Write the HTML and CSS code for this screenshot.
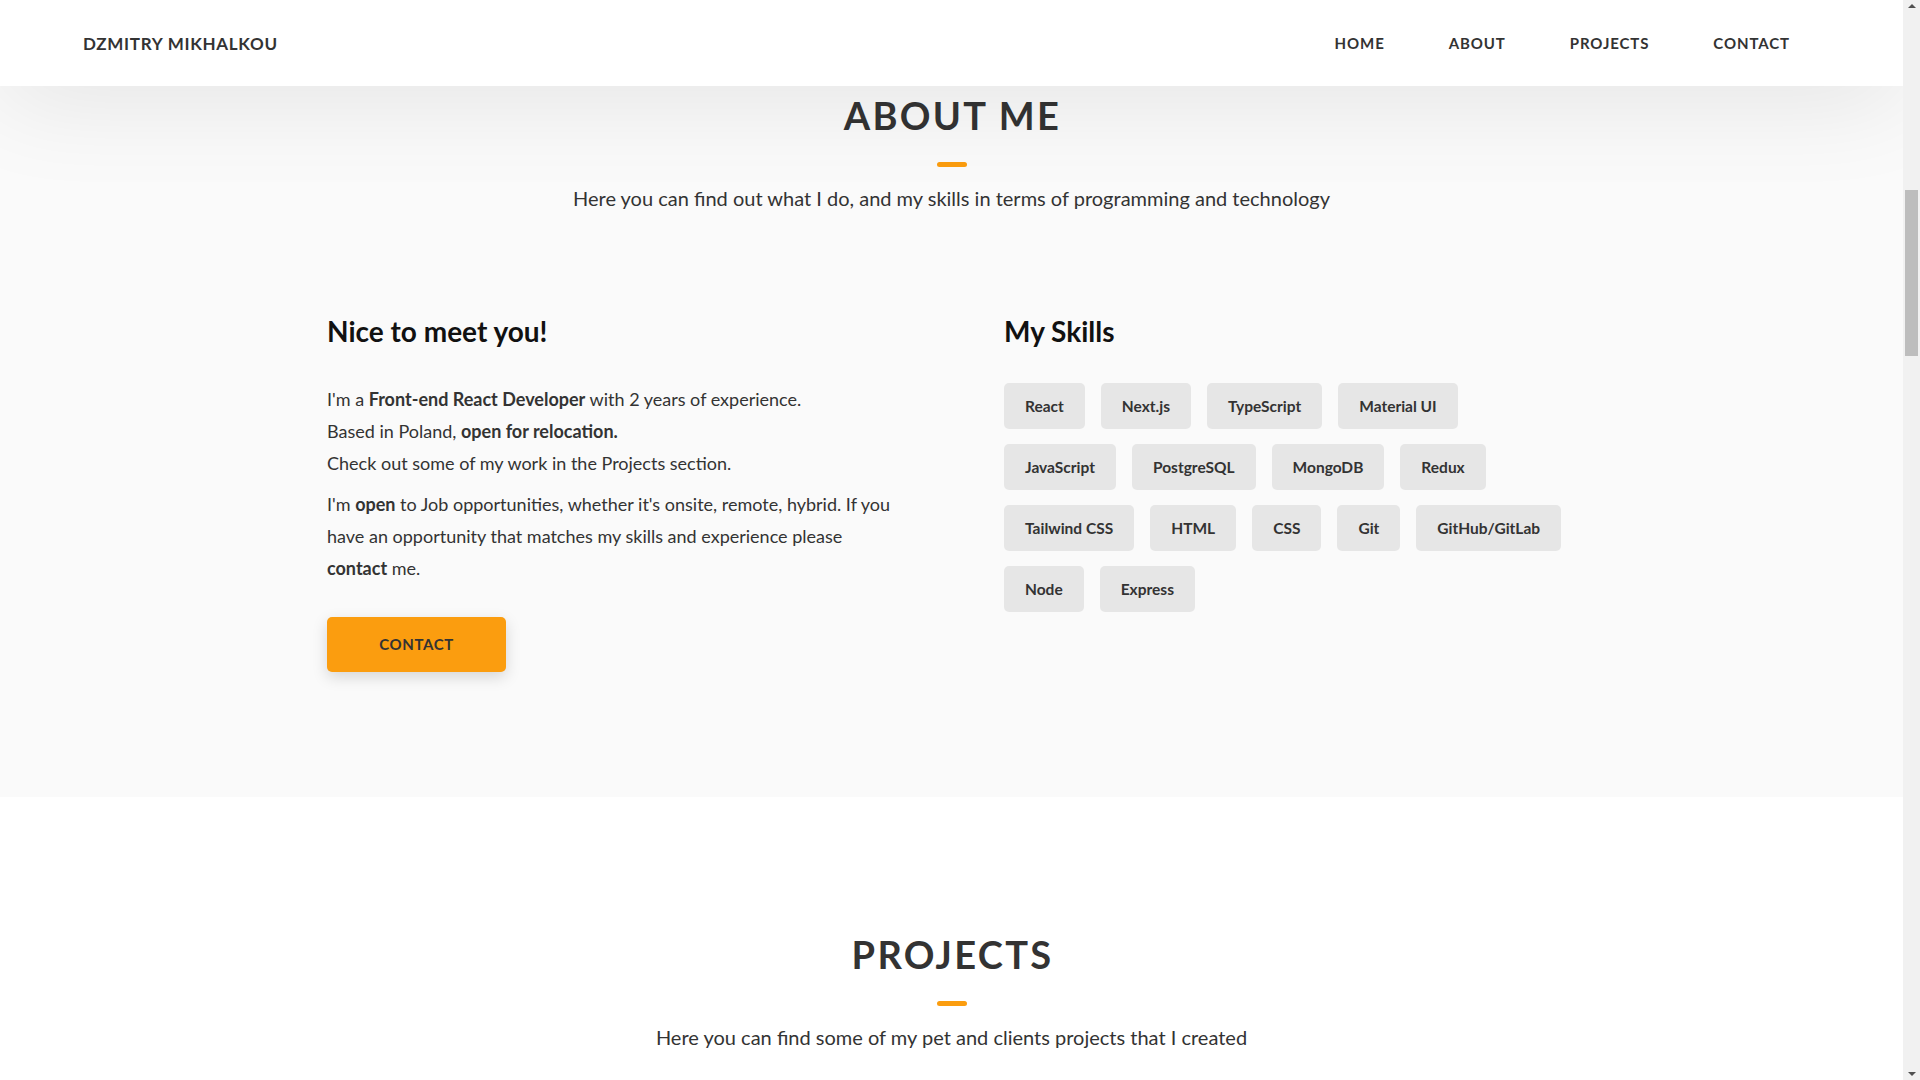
FILE: index.html
```html
<!DOCTYPE html>
<html lang="en">
<head>
<meta charset="utf-8">
<title>Dzmitry Mikhalkou</title>
<link rel="stylesheet" href="styles.css">
</head>
<body>
<header class="header">
  <a class="logo" href="#">DZMITRY MIKHALKOU</a>
  <nav class="nav">
    <a class="nav-link" href="#">HOME</a>
    <a class="nav-link" href="#">ABOUT</a>
    <a class="nav-link" href="#">PROJECTS</a>
    <a class="nav-link" href="#">CONTACT</a>
  </nav>
</header>

<section class="section about">
  <h2 class="section-title">ABOUT ME</h2>
  <div class="section-line"></div>
  <p class="section-sub">Here you can find out what I do, and my skills in terms of programming and technology</p>

  <div class="about-content">
    <div class="about-col">
      <h3 class="col-title">Nice to meet you!</h3>
      <p class="about-text">I'm a <strong>Front-end React Developer</strong> with 2 years of experience.<br>Based in Poland, <strong>open for relocation.</strong><br>Check out some of my work in the Projects section.</p>
      <p class="about-text">I'm <strong>open</strong> to Job opportunities, whether it's onsite, remote, hybrid. If you have an opportunity that matches my skills and experience please <strong>contact</strong> me.</p>
      <a class="btn" href="#">CONTACT</a>
    </div>
    <div class="about-col">
      <h3 class="col-title">My Skills</h3>
      <div class="skills">
        <span class="skill">React</span>
        <span class="skill">Next.js</span>
        <span class="skill">TypeScript</span>
        <span class="skill">Material UI</span>
        <span class="break"></span>
        <span class="skill">JavaScript</span>
        <span class="skill">PostgreSQL</span>
        <span class="skill">MongoDB</span>
        <span class="skill">Redux</span>
        <span class="break"></span>
        <span class="skill">Tailwind CSS</span>
        <span class="skill">HTML</span>
        <span class="skill">CSS</span>
        <span class="skill">Git</span>
        <span class="skill">GitHub/GitLab</span>
        <span class="break"></span>
        <span class="skill">Node</span>
        <span class="skill">Express</span>
      </div>
    </div>
  </div>
</section>

<section class="section projects">
  <h2 class="section-title">PROJECTS</h2>
  <div class="section-line"></div>
  <p class="section-sub">Here you can find some of my pet and clients projects that I created</p>
</section>

<div class="scrollbar" aria-hidden="true">
  <span class="sb-arrow sb-up"></span>
  <span class="sb-thumb"></span>
  <span class="sb-arrow sb-down"></span>
</div>
</body>
</html>
```
FILE: styles.css
```css
* {
  box-sizing: border-box;
  margin: 0;
  padding: 0;
}

body {
  font-family: Lato, "Liberation Sans", sans-serif;
  color: #333;
  background: #fff;
  margin-right: 17px;
}

a {
  text-decoration: none;
  color: inherit;
}

.header {
  position: sticky;
  top: 0;
  z-index: 10;
  height: 86px;
  background: #fff;
  display: flex;
  align-items: center;
  justify-content: space-between;
  padding: 0 83px;
  box-shadow: 0 10px 100px rgba(0, 0, 0, 0.1);
}

.logo {
  font-size: 17px;
  font-weight: 700;
  letter-spacing: 0.7px;
  color: #333;
  padding-top: 1px;
}

.nav {
  display: flex;
}

.nav-link {
  font-size: 15px;
  font-weight: 700;
  letter-spacing: 0.9px;
  padding: 0 32px;
  color: #333;
}

.nav-link:last-child {
  padding-right: 30px;
}

.section {
  text-align: center;
}

.about {
  background: #fafafa;
  padding: 5px 0 125px;
}

.projects {
  background: #fff;
  padding: 133px 0 400px;
}

.section-title {
  font-size: 38px;
  line-height: 48px;
  font-weight: 700;
  letter-spacing: 2.3px;
  color: #333;
  padding-left: 2px;
}

.section-line {
  width: 30px;
  height: 5px;
  border-radius: 3px;
  background: #fb9d0f;
  margin: 23px auto 0;
}

.section-sub {
  font-size: 20px;
  line-height: 30px;
  margin-top: 16px;
  color: #333;
}

.about-content {
  width: 1249px;
  margin: 101px auto 0;
  display: grid;
  grid-template-columns: 572px 572px;
  column-gap: 105px;
  text-align: left;
}

.col-title {
  font-size: 28px;
  line-height: 34px;
  font-weight: 700;
  color: #111;
  margin-bottom: 35px;
}

.about-text {
  font-size: 18px;
  line-height: 32px;
  color: #333;
  margin-bottom: 9px;
}

.about-text strong {
  font-weight: 700;
}

.btn {
  display: block;
  margin-top: 33px;
  width: 179px;
  height: 55px;
  line-height: 55px;
  text-align: center;
  background: #fb9d0f;
  color: #333;
  font-size: 15px;
  font-weight: 700;
  letter-spacing: 0.6px;
  border-radius: 5px;
  box-shadow: 0 5px 15px rgba(0, 0, 0, 0.15);
}

.skills {
  display: flex;
  flex-wrap: wrap;
  column-gap: 16px;
}

.break {
  flex-basis: 100%;
  height: 0;
}

.skill {
  display: inline-block;
  height: 46px;
  line-height: 46px;
  margin-bottom: 15px;
  padding: 0 21px;
  background: #e6e6e6;
  border-radius: 5px;
  font-size: 15.5px;
  font-weight: 700;
  color: #333;
}

.scrollbar {
  position: fixed;
  top: 0;
  right: 0;
  width: 17px;
  height: 100vh;
  background: #f1f1f1;
  z-index: 20;
}

.sb-thumb {
  position: absolute;
  top: 190px;
  left: 2px;
  width: 13px;
  height: 166px;
  background: #bdbdbd;
}

.sb-arrow {
  position: absolute;
  left: 5px;
  width: 0;
  height: 0;
  border-left: 4px solid transparent;
  border-right: 4px solid transparent;
}

.sb-up {
  top: 4px;
  border-bottom: 4px solid #505050;
}

.sb-down {
  bottom: 4px;
  border-top: 4px solid #505050;
}
```
